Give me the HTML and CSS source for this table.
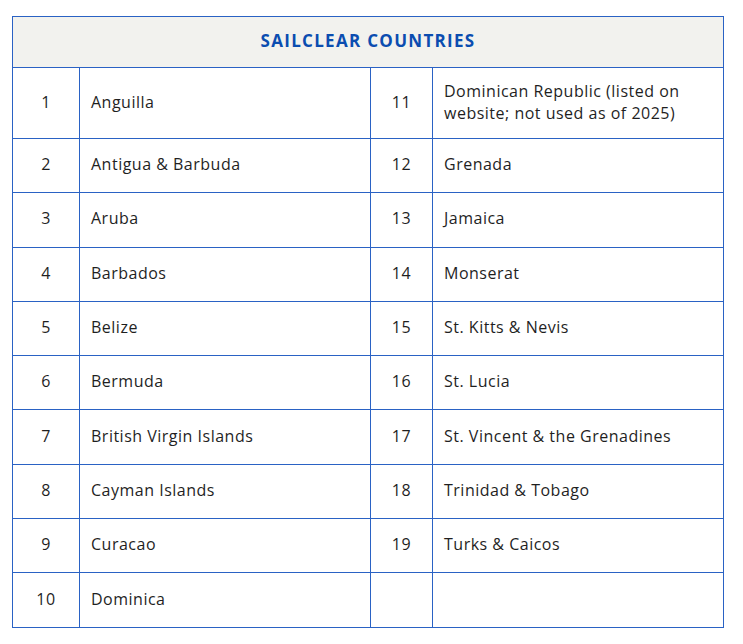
FILE: index.html
```html
<!DOCTYPE html>
<html>
<head>
<meta charset="utf-8">
<link rel="stylesheet" href="styles.css">
</head>
<body>
<table class="countries">
  <colgroup>
    <col class="c-num"><col class="c-name"><col class="c-num2"><col class="c-name">
  </colgroup>
  <thead>
    <tr class="head"><th colspan="4">SAILCLEAR COUNTRIES</th></tr>
  </thead>
  <tbody>
    <tr class="tall"><td class="num">1</td><td>Anguilla</td><td class="num">11</td><td>Dominican Republic (listed on website; not used as of 2025)</td></tr>
    <tr><td class="num">2</td><td>Antigua &amp; Barbuda</td><td class="num">12</td><td>Grenada</td></tr>
    <tr><td class="num">3</td><td>Aruba</td><td class="num">13</td><td>Jamaica</td></tr>
    <tr><td class="num">4</td><td>Barbados</td><td class="num">14</td><td>Monserat</td></tr>
    <tr><td class="num">5</td><td>Belize</td><td class="num">15</td><td>St. Kitts &amp; Nevis</td></tr>
    <tr><td class="num">6</td><td>Bermuda</td><td class="num">16</td><td>St. Lucia</td></tr>
    <tr><td class="num">7</td><td>British Virgin Islands</td><td class="num">17</td><td>St. Vincent &amp; the Grenadines</td></tr>
    <tr><td class="num">8</td><td>Cayman Islands</td><td class="num">18</td><td>Trinidad &amp; Tobago</td></tr>
    <tr><td class="num">9</td><td>Curacao</td><td class="num">19</td><td>Turks &amp; Caicos</td></tr>
    <tr><td class="num">10</td><td>Dominica</td><td class="num"></td><td></td></tr>
  </tbody>
</table>
</body>
</html>
```
FILE: styles.css
```css
html, body {
  margin: 0;
  padding: 0;
  background: #ffffff;
}
body {
  padding: 16px 0 0 12px;
  font-family: "Open Sans", "Liberation Sans", sans-serif;
}
.countries {
  border-collapse: collapse;
  width: 712px;
  table-layout: fixed;
  color: #1f1f1f;
  font-size: 16px;
  letter-spacing: 0.5px;
}
.c-num { width: 67px; }
.c-num2 { width: 62px; }
.c-name { width: 291px; }
.countries th,
.countries td {
  border: 1px solid #2a62c4;
  padding: 0 11px 3px;
  text-align: left;
  vertical-align: middle;
  line-height: 22px;
}
.countries tr { height: 54.3px; }
.countries tr.head { height: 51px; }
.countries tr.tall { height: 71px; }
.countries th {
  background: #f2f2ee;
  color: #0b4db0;
  font-weight: 700;
  font-size: 17px;
  letter-spacing: 1.3px;
  text-align: center;
  padding: 0 11px 2px;
}
.countries td.num {
  text-align: center;
  padding: 0 0 3px;
}
```
